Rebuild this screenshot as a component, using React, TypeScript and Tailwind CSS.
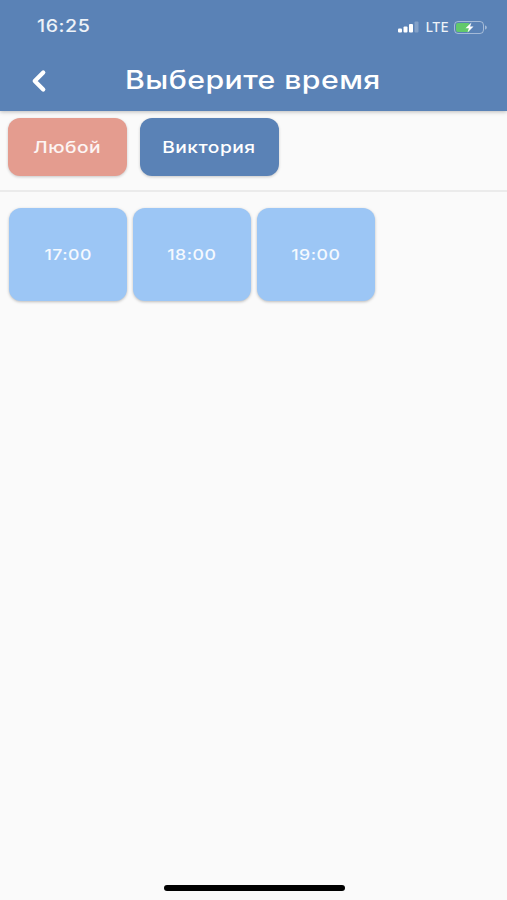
import { ChevronLeft } from "lucide-react";

const times = ["17:00", "18:00", "19:00"];

function StatusIcons() {
  return (
    <div className="flex items-center">
      <svg width="23" height="12" viewBox="0 0 23 12" className="mr-[5px]">
        <rect x="0" y="7.5" width="4" height="4" rx="1" fill="#fff" />
        <rect x="5.5" y="5.5" width="4" height="6" rx="1" fill="#fff" />
        <rect x="11" y="3" width="4" height="8.5" rx="1" fill="#fff" />
        <rect x="16.5" y="0.5" width="4" height="11" rx="1" fill="#fff" fillOpacity="0.25" />
      </svg>
      <span className="text-[13px] leading-none font-medium text-white/90 tracking-[0.3px]">LTE</span>
      <svg width="34" height="13" viewBox="0 0 34 13" className="ml-[5px]">
        <rect x="0.5" y="0.5" width="29" height="12" rx="3.5" fill="none" stroke="#fff" strokeOpacity="0.45" />
        <rect x="2" y="2" width="14" height="9" rx="2" fill="#62c96b" />
        <path d="M31 4.5c1.2.3 1.8 1 1.8 2s-.6 1.7-1.8 2z" fill="#fff" fillOpacity="0.45" />
        <path d="M17.5 1.5 11.5 7.3h3.4l-1.4 4.2 6-5.9h-3.4z" fill="#fff" />
      </svg>
    </div>
  );
}

export default function App() {
  return (
    <div className="relative flex flex-col h-[900px] w-[507px] overflow-hidden bg-[#fafafa] font-['Inter',sans-serif]">
      {/* Шапка */}
      <header className="h-[111px] shrink-0 bg-[#5a82b6] shadow-[0_1px_4px_rgba(0,0,0,0.25)] z-10 text-white">
        <div className="flex items-center justify-between h-[54px] pl-[37px] pr-[19px]">
          <span className="inline-block origin-left scale-x-[1.15] text-[17px] font-medium tracking-[0.5px] text-white/90">16:25</span>
          <StatusIcons />
        </div>
        <div className="flex items-center h-[54px] pl-[22px]">
          <ChevronLeft size={34} strokeWidth={3} />
          <h1 className="ml-[69px] origin-left scale-x-[1.21] text-[25px] font-medium whitespace-nowrap tracking-[0.35px]">Выберите время</h1>
        </div>
      </header>

      {/* Мастера */}
      <div className="flex gap-[13px] pl-[8px] pt-[7px] pb-[14px] border-b-2 border-[#ebebeb]">
        <button
          type="button"
          className="w-[119px] h-[58px] rounded-[12px] bg-[#e49c8f] text-white/90 text-[16px] font-medium tracking-[0.4px] shadow-[0_1px_3px_rgba(0,0,0,0.2)]"
        >
          <span className="inline-block scale-x-[1.2]">Любой</span>
        </button>
        <button
          type="button"
          className="w-[139px] h-[58px] pr-[2px] rounded-[12px] bg-[#5a82b6] text-white text-[16px] font-medium tracking-[0.4px] shadow-[0_1px_3px_rgba(0,0,0,0.2)]"
        >
          <span className="inline-block scale-x-[1.2]">Виктория</span>
        </button>
      </div>

      {/* Время */}
      <div className="flex gap-[6px] pl-[9px] pt-[16px]">
        {times.map((t) => (
          <button
            key={t}
            type="button"
            className="w-[118px] h-[93px] pt-[2px] rounded-[12px] bg-[#9cc6f5] text-white/90 text-[15px] font-medium tracking-[0.4px] shadow-[0_1px_3px_rgba(0,0,0,0.25)]"
          >
            <span className="inline-block scale-x-[1.18]">{t}</span>
          </button>
        ))}
      </div>

      <div className="absolute left-[164px] bottom-[9px] w-[181px] h-[6px] rounded-full bg-black" />
    </div>
  );
}
